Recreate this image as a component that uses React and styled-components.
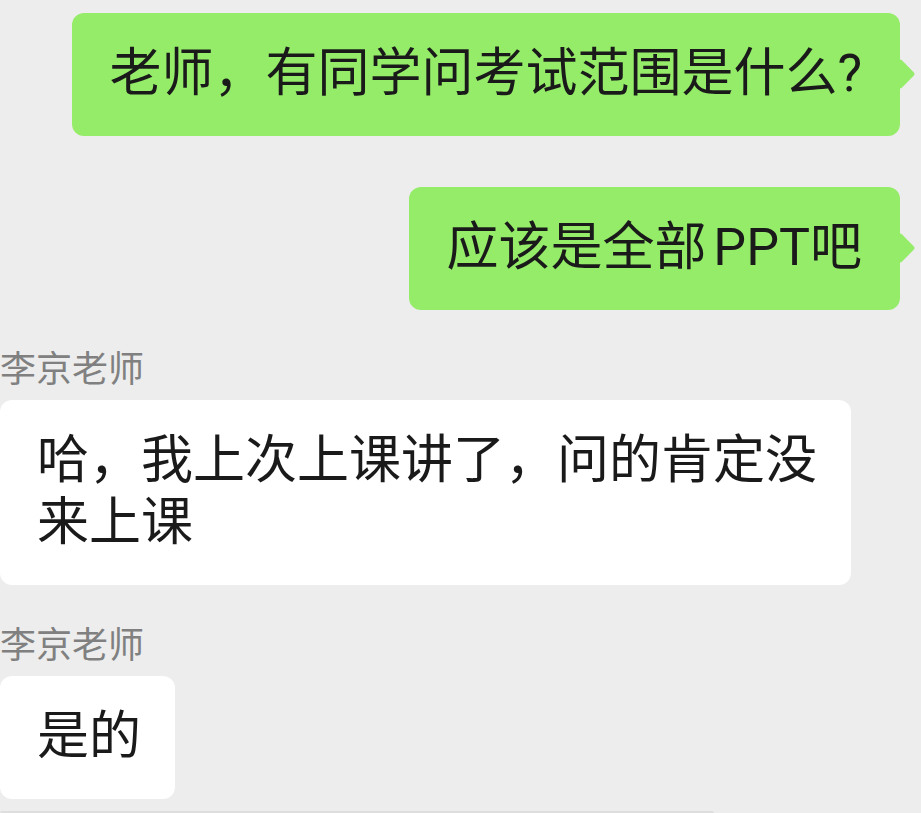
import React from "react";
import styled, { createGlobalStyle } from "styled-components";

const messages = [
  { id: 1, mine: true, text: "老师，有同学问考试范围是什么?" },
  { id: 2, mine: true, text: "应该是全部 PPT吧" },
  { id: 3, mine: false, name: "李京老师", text: "哈，我上次上课讲了，问的肯定没来上课" },
  { id: 4, mine: false, name: "李京老师", text: "是的" },
];

function App() {
  return (
    <>
      <GlobalStyle />
      <ChatList>
        {messages.map((msg) =>
          msg.mine ? (
            <SentRow key={msg.id}>
              <GreenBubble>{msg.text}</GreenBubble>
            </SentRow>
          ) : (
            <ReceivedRow key={msg.id}>
              <SenderName>{msg.name}</SenderName>
              <WhiteBubble>{msg.text}</WhiteBubble>
            </ReceivedRow>
          )
        )}
        <NextBubbleEdge />
      </ChatList>
    </>
  );
}

const GlobalStyle = createGlobalStyle`
  html, body {
    margin: 0;
    padding: 0;
    background: #ededed;
    overflow: hidden;
  }
  body {
    font-family: Roboto, "Noto Sans CJK SC", sans-serif;
  }
`;

const ChatList = styled.div`
  display: flex;
  flex-direction: column;
  padding-top: 13px;
  height: 813px;
  box-sizing: border-box;
`;

const SentRow = styled.div`
  display: flex;
  justify-content: flex-end;
  padding-right: 21px;
  margin-bottom: 51px;
`;

const ReceivedRow = styled.div`
  display: flex;
  flex-direction: column;
  align-items: flex-start;
  margin-top: -14px;
  margin-bottom: 52px;
`;

const Bubble = styled.div`
  box-sizing: border-box;
  font-size: 52px;
  line-height: 62px;
  padding: 30px 34px 31px 37px;
  border-radius: 12px;
  color: #1a1a1a;
  max-width: 851px;
  word-spacing: -6px;
`;

const GreenBubble = styled(Bubble)`
  position: relative;
  background: #95ec69;
  padding-right: 38px;

  &::after {
    content: "";
    position: absolute;
    right: -11px;
    top: calc(50% - 12px);
    width: 22px;
    height: 22px;
    background: #95ec69;
    border-radius: 3px;
    transform: rotate(45deg);
  }
`;

const WhiteBubble = styled(Bubble)`
  background: #ffffff;
`;

const SenderName = styled.div`
  font-size: 36px;
  line-height: 46px;
  color: #808080;
  margin-bottom: 7px;
`;

const NextBubbleEdge = styled.div`
  margin-top: -40px;
  width: 714px;
  height: 4px;
  background: #dedede;
  border-radius: 6px 6px 0 0;
`;

export default App;
